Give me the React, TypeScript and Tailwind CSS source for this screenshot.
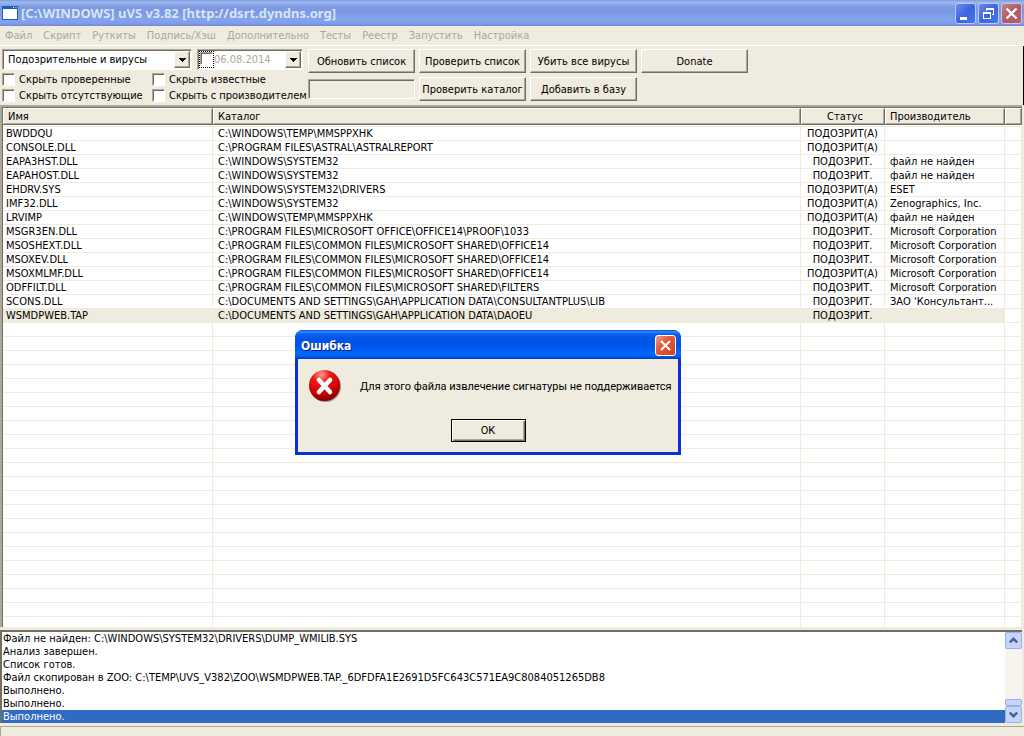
import { useState } from "react";

type FileRow = {
	name: string;
	dir: string;
	status: string;
	vendor: string;
};

const SUSPECT = "ПОДОЗРИТ.";
const SUSPECT_AUTO = "ПОДОЗРИТ(А)";

const files: FileRow[] = [
	{ name: "BWDDQU", dir: "C:\\WINDOWS\\TEMP\\MMSPPXHK", status: SUSPECT_AUTO, vendor: "" },
	{ name: "CONSOLE.DLL", dir: "C:\\PROGRAM FILES\\ASTRAL\\ASTRALREPORT", status: SUSPECT_AUTO, vendor: "" },
	{ name: "EAPA3HST.DLL", dir: "C:\\WINDOWS\\SYSTEM32", status: SUSPECT, vendor: "файл не найден" },
	{ name: "EAPAHOST.DLL", dir: "C:\\WINDOWS\\SYSTEM32", status: SUSPECT, vendor: "файл не найден" },
	{ name: "EHDRV.SYS", dir: "C:\\WINDOWS\\SYSTEM32\\DRIVERS", status: SUSPECT_AUTO, vendor: "ESET" },
	{ name: "IMF32.DLL", dir: "C:\\WINDOWS\\SYSTEM32", status: SUSPECT_AUTO, vendor: "Zenographics, Inc." },
	{ name: "LRVIMP", dir: "C:\\WINDOWS\\TEMP\\MMSPPXHK", status: SUSPECT_AUTO, vendor: "файл не найден" },
	{ name: "MSGR3EN.DLL", dir: "C:\\PROGRAM FILES\\MICROSOFT OFFICE\\OFFICE14\\PROOF\\1033", status: SUSPECT, vendor: "Microsoft Corporation" },
	{ name: "MSOSHEXT.DLL", dir: "C:\\PROGRAM FILES\\COMMON FILES\\MICROSOFT SHARED\\OFFICE14", status: SUSPECT, vendor: "Microsoft Corporation" },
	{ name: "MSOXEV.DLL", dir: "C:\\PROGRAM FILES\\COMMON FILES\\MICROSOFT SHARED\\OFFICE14", status: SUSPECT, vendor: "Microsoft Corporation" },
	{ name: "MSOXMLMF.DLL", dir: "C:\\PROGRAM FILES\\COMMON FILES\\MICROSOFT SHARED\\OFFICE14", status: SUSPECT_AUTO, vendor: "Microsoft Corporation" },
	{ name: "ODFFILT.DLL", dir: "C:\\PROGRAM FILES\\COMMON FILES\\MICROSOFT SHARED\\FILTERS", status: SUSPECT, vendor: "Microsoft Corporation" },
	{ name: "SCONS.DLL", dir: "C:\\DOCUMENTS AND SETTINGS\\GAH\\APPLICATION DATA\\CONSULTANTPLUS\\LIB", status: SUSPECT, vendor: "ЗАО 'Консультант..." },
	{ name: "WSMDPWEB.TAP", dir: "C:\\DOCUMENTS AND SETTINGS\\GAH\\APPLICATION DATA\\DAOEU", status: SUSPECT, vendor: "" },
];

const log = [
	"Файл не найден: C:\\WINDOWS\\SYSTEM32\\DRIVERS\\DUMP_WMILIB.SYS",
	"Анализ завершен.",
	"Список готов.",
	"Файл скопирован в ZOO: C:\\TEMP\\UVS_V382\\ZOO\\WSMDPWEB.TAP._6DFDFA1E2691D5FC643C571EA9C8084051265DB8",
	"Выполнено.",
	"Выполнено.",
	"Выполнено.",
];

const menu = [
	"Файл",
	"Скрипт",
	"Руткиты",
	"Подпись/Хэш",
	"Дополнительно",
	"Тесты",
	"Реестр",
	"Запустить",
	"Настройка",
];

// blank lines that keep the grid going below the last file
const blankRows = Array.from({ length: 60 }, (_, i) => i);

const sunken =
	"border border-t-[#aca899] border-l-[#aca899] border-r-white border-b-white shadow-[inset_1px_1px_0_#716f64]";
const raised =
	"border border-t-white border-l-white border-r-[#716f64] border-b-[#716f64] shadow-[inset_-1px_-1px_0_#aca899]";

const PushButton = ({ label }: { label: string }) => (
	<button
		type="button"
		className={`h-6 w-[107px] bg-[#efebde] text-center whitespace-nowrap ${raised}`}
	>
		{label}
	</button>
);

const DropArrow = () => (
	<span
		className={`pointer-events-none flex w-4 shrink-0 items-center justify-center bg-[#efebde] ${raised}`}
	>
		<svg width="7" height="4" viewBox="0 0 7 4" shapeRendering="crispEdges">
			<path d="M0 0h7v1h-1v1h-1v1h-1v1h-1v-1h-1v-1h-1v-1h-1z" />
		</svg>
	</span>
);

const Check = ({ label }: { label: string }) => (
	<label className="flex h-4 items-center gap-1 whitespace-nowrap">
		<input
			type="checkbox"
			className={`size-[13px] shrink-0 appearance-none bg-white ${sunken}`}
		/>
		{label}
	</label>
);

const ErrorDialog = ({ onClose }: { onClose: () => void }) => (
	<div
		role="alertdialog"
		aria-labelledby="error-title"
		className="absolute top-[330px] left-[295px] flex w-[386px] flex-col rounded-t-lg bg-[#0831d9] px-[3px] pb-[3px]"
	>
		<div className="-mx-[3px] flex h-[29px] items-center justify-between rounded-t-lg bg-[linear-gradient(180deg,#0046d5_0%,#2b8bff_6%,#0a5ef0_14%,#0055e5_30%,#0055e8_55%,#0066ff_80%,#0060f5_90%,#0038c0_100%)] pt-[3px] pr-[5px] pb-px pl-[6px]">
			<h2
				id="error-title"
				className="text-[12px] leading-4 font-bold text-white [text-shadow:1px_1px_#0a1883]"
			>
				Ошибка
			</h2>
			<button
				type="button"
				aria-label="Закрыть"
				onClick={onClose}
				className="flex size-[21px] items-center justify-center rounded-[3px] border border-white bg-[linear-gradient(135deg,#f0a088,#e25a38_40%,#d0421c)]"
			>
				<svg width="13" height="13" viewBox="0 0 13 13">
					<path d="M2 2l9 9M11 2l-9 9" stroke="white" strokeWidth="2" />
				</svg>
			</button>
		</div>
		<div className="flex flex-col items-center gap-[6px] bg-[#efebde] px-[10px] pb-[10px] font-[Roboto,sans-serif]">
			<div className="flex h-[54px] w-full items-center gap-[18px]">
				<svg width="34" height="34" viewBox="0 0 34 34" className="shrink-0">
					<defs>
						<radialGradient id="ball" cx="0.4" cy="0.15" r="0.9">
							<stop offset="0" stopColor="#ff9a90" />
							<stop offset="0.3" stopColor="#ee1c18" />
							<stop offset="0.7" stopColor="#cc0000" />
							<stop offset="1" stopColor="#6a0000" />
						</radialGradient>
					</defs>
					<circle cx="17.5" cy="17.5" r="15.5" fill="#6b6760" opacity="0.7" />
					<circle cx="16.5" cy="16.5" r="15.5" fill="url(#ball)" />
					<path
						d="M11 11l11 12M22 11l-11 12"
						stroke="white"
						strokeWidth="4.5"
						strokeLinecap="round"
					/>
				</svg>
				<p className="whitespace-nowrap">
					Для этого файла извлечение сигнатуры не поддерживается
				</p>
			</div>
			<button
				type="button"
				onClick={onClose}
				className="h-[23px] w-[75px] border border-black bg-[#efebde] shadow-[inset_1px_1px_0_white,inset_-1px_-1px_0_#716f64,inset_-2px_-2px_0_#aca899]"
			>
				OK
			</button>
		</div>
	</div>
);

export default function App() {
	const [dialogOpen, setDialogOpen] = useState(true);

	return (
		<div className="relative flex h-screen flex-col overflow-hidden bg-[#efebde] font-['DejaVu_Sans_Condensed','DejaVu_Sans',sans-serif] text-[11px] leading-[13px] text-black">
			<header className="flex h-[26px] shrink-0 items-center gap-[3px] bg-[linear-gradient(180deg,#7b98e4_0%,#a0b9ee_8%,#7d9be3_25%,#7b98e2_45%,#82a5ea_75%,#7f9ee6_90%,#7386d8_100%)] px-[2px]">
				<svg width="16" height="14" viewBox="0 0 16 14" shapeRendering="crispEdges" className="shrink-0">
					<rect width="16" height="14" fill="#1c5fc4" />
					<rect x="1" y="3" width="14" height="10" fill="white" />
					<rect x="11" y="1" width="1" height="1" fill="white" />
					<rect x="13" y="1" width="2" height="1" fill="#f08040" />
				</svg>
				<h1 className="grow font-['Noto_Sans',sans-serif] text-[13px] leading-[18px] font-bold whitespace-nowrap text-[#d8e4f8]">
					[C:\WINDOWS] uVS v3.82 [http://dsrt.dyndns.org]
				</h1>
				<div className="flex gap-[2px]">
					<button type="button" aria-label="Свернуть" className="size-[21px] rounded-[3px] border border-[#b8c8f4] bg-[linear-gradient(135deg,#6c8cec,#3c64dc_50%,#4678f0)]">
						<svg width="19" height="19" viewBox="0 0 19 19">
							<path d="M4 13h7v3h-7z" fill="white" />
						</svg>
					</button>
					<button type="button" aria-label="Восстановить" className="size-[21px] rounded-[3px] border border-[#b8c8f4] bg-[linear-gradient(135deg,#6c8cec,#3c64dc_50%,#4678f0)]">
						<svg width="19" height="19" viewBox="0 0 19 19" fill="white" shapeRendering="crispEdges">
							<path d="M7 4h8v7h-2v-1h1v-4h-6v1h-1z" />
							<path fillRule="evenodd" d="M4 8h8v7h-8zM5 10v4h6v-4z" />
						</svg>
					</button>
					<button type="button" aria-label="Закрыть" className="size-[21px] rounded-[3px] border border-[#d8c0d8] bg-[linear-gradient(135deg,#c08090,#b05a68_50%,#b86070)]">
						<svg width="19" height="19" viewBox="0 0 19 19">
							<path d="M4.5 4.5l10 10M14.5 4.5l-10 10" stroke="white" strokeWidth="2.4" />
						</svg>
					</button>
				</div>
			</header>

			<nav className="flex h-5 shrink-0 items-center gap-[11px] border-b border-white pl-[5px] text-[#aca899]">
				{menu.map((item) => (
					<button type="button" key={item}>
						{item}
					</button>
				))}
			</nav>

			<section className="flex h-[59px] shrink-0 gap-[5px] border-r border-black pt-[3px] pl-[2px]">
				<div className="w-[301px]">
					<div className="flex justify-between">
						<div className={`flex h-[21px] w-[190px] bg-white p-px ${sunken}`}>
							<select
								aria-label="Категория"
								className="min-w-0 grow appearance-none pl-1 outline-none"
							>
								<option>Подозрительные и вирусы</option>
							</select>
							<DropArrow />
						</div>
						<div className={`flex h-[21px] w-[106px] bg-white p-px ${sunken}`}>
							<span className="flex w-[15px] shrink-0 border border-dotted border-black bg-white">
								<input
									type="checkbox"
									aria-label="Учитывать дату"
									className={`size-[13px] appearance-none ${sunken}`}
								/>
							</span>
							<input
								type="text"
								aria-label="Дата"
								defaultValue="06.08.2014"
								className="min-w-0 grow text-[#aca899] outline-none"
							/>
							<DropArrow />
						</div>
					</div>
					<div className="grid grid-cols-[150px_1fr] pt-px">
						<Check label="Скрыть проверенные" />
						<Check label="Скрыть известные" />
						<Check label="Скрыть отсутствующие" />
						<Check label="Скрыть с производителем" />
					</div>
				</div>
				<div className="grid auto-rows-[24px] grid-cols-[repeat(4,107px)] items-center gap-x-1 gap-y-1">
					<PushButton label="Обновить список" />
					<PushButton label="Проверить список" />
					<PushButton label="Убить все вирусы" />
					<PushButton label="Donate" />
					<div role="progressbar" aria-label="Ход проверки" className={`h-5 ${sunken}`} />
					<PushButton label="Проверить каталог" />
					<PushButton label="Добавить в базу" />
				</div>
			</section>

			<main className="mr-[2px] flex min-h-0 flex-1 flex-col border-t-2 border-l-2 border-t-[#aca899] border-l-[#aca899]">
				<div className="min-h-0 flex-1 overflow-hidden border-t border-l border-[#716f64] bg-white">
					<table className="w-full table-fixed border-separate border-spacing-0">
						<colgroup>
							<col className="w-[210px]" />
							<col />
							<col className="w-[84px]" />
							<col className="w-[120px]" />
							<col className="w-[17px]" />
						</colgroup>
						<thead>
							<tr className="h-[17px] bg-[#efebde] text-left [&>th]:border-t [&>th]:border-r [&>th]:border-b [&>th]:border-t-white [&>th]:border-r-[#716f64] [&>th]:border-b-[#716f64] [&>th]:p-0 [&>th]:pl-[5px] [&>th]:font-normal [&>th]:shadow-[inset_1px_0_0_white,inset_-1px_-1px_0_#aca899]">
								<th>Имя</th>
								<th>Каталог</th>
								<th className="text-center">Статус</th>
								<th>Производитель</th>
								<th aria-label="Прочее" />
							</tr>
						</thead>
						<tbody className="[&_td]:h-[14px] [&_td]:border-r [&_td]:border-b [&_td]:border-[#efebde] [&_td]:p-0 [&_td]:whitespace-nowrap">
							<tr>
								<td colSpan={5} className="h-[2px]! border-r-0!" />
							</tr>
							{files.map((file) => (
								<tr
									key={file.name}
									className={
										file.name === "WSMDPWEB.TAP"
											? "[&>td:not(:last-child)]:bg-[#efebde]"
											: ""
									}
								>
									<td className="pl-[3px]!">{file.name}</td>
									<td className="pl-[5px]!">{file.dir}</td>
									<td className="text-center">{file.status}</td>
									<td className="pl-[5px]!">{file.vendor}</td>
									<td />
								</tr>
							))}
							{blankRows.map((row) => (
								<tr key={row}>
									<td />
									<td />
									<td />
									<td />
									<td />
								</tr>
							))}
						</tbody>
					</table>
				</div>
			</main>

			<section className="mt-[3px] mr-[2px] flex shrink-0 border-t-2 border-l-2 border-t-[#716f64] border-l-[#716f64] bg-white">
				<ul className="min-w-0 grow">
					{log.map((line, i) => (
						<li
							key={i}
							className={`h-[13px] pl-px whitespace-nowrap ${i === log.length - 1 ? "bg-[#316ac5] text-white" : ""}`}
						>
							{line}
						</li>
					))}
				</ul>
				<div className="flex w-[17px] flex-col bg-[#f5f4ee]">
					<button type="button" aria-label="Вверх" className="flex h-[17px] items-center justify-center rounded-[2px] border border-[#98b0e8] bg-[#c4d4fc]">
						<svg width="9" height="7" viewBox="0 0 9 7">
							<path d="M.8 5.5l3.7-3.7 3.7 3.7" fill="none" stroke="#4d6185" strokeWidth="2.4" />
						</svg>
					</button>
					<div className="mt-auto h-[7px] rounded-[2px] border border-[#98b0e8] bg-[#c4d4fc]" />
					<button type="button" aria-label="Вниз" className="flex h-[17px] items-center justify-center rounded-[2px] border border-[#98b0e8] bg-[#c4d4fc]">
						<svg width="9" height="7" viewBox="0 0 9 7">
							<path d="M.8 1.5l3.7 3.7 3.7-3.7" fill="none" stroke="#4d6185" strokeWidth="2.4" />
						</svg>
					</button>
				</div>
			</section>
			<footer className="mt-[3px] h-[10px] shrink-0 border-t border-l border-[#aca899]" />

			{dialogOpen && <ErrorDialog onClose={() => setDialogOpen(false)} />}
		</div>
	);
}
